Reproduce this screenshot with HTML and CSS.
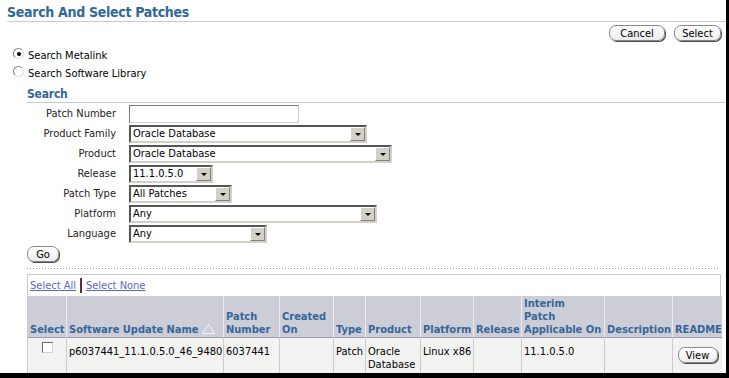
FILE: index.html
```html
<!DOCTYPE html>
<html lang="en">
<head>
  <meta charset="UTF-8">
  <title>Search And Select Patches</title>
  <link rel="stylesheet" href="styles.css">
</head>
<body>
  <div class="page">
    <h1 class="title">Search And Select Patches</h1>

    <div class="actions">
      <button class="btn cancel">Cancel</button>
      <button class="btn pick">Select</button>
    </div>

    <div class="choices">
      <div class="radio"><span class="dot on"></span>Search Metalink</div>
      <div class="radio"><span class="dot"></span>Search Software Library</div>
    </div>

    <div class="search">
      <h2 class="subtitle">Search</h2>

      <div class="form">
        <span class="lbl">Patch Number</span>
        <span class="field"><span class="input"></span></span>

        <span class="lbl">Product Family</span>
        <span class="field"><span class="select w238"><span class="val">Oracle Database</span><span class="arrow"></span></span></span>

        <span class="lbl">Product</span>
        <span class="field"><span class="select w263"><span class="val">Oracle Database</span><span class="arrow"></span></span></span>

        <span class="lbl">Release</span>
        <span class="field"><span class="select w84"><span class="val">11.1.0.5.0</span><span class="arrow"></span></span></span>

        <span class="lbl">Patch Type</span>
        <span class="field"><span class="select w103"><span class="val">All Patches</span><span class="arrow"></span></span></span>

        <span class="lbl">Platform</span>
        <span class="field"><span class="select w248"><span class="val">Any</span><span class="arrow"></span></span></span>

        <span class="lbl">Language</span>
        <span class="field"><span class="select w138"><span class="val">Any</span><span class="arrow"></span></span></span>
      </div>

      <button class="btn go">Go</button>

      <div class="dots"></div>

      <div class="results">
        <div class="bulk">
          <a href="#">Select All</a><span class="sep"></span><a href="#">Select None</a>
        </div>
        <table class="grid">
          <colgroup>
            <col style="width:38px">
            <col style="width:157px">
            <col style="width:56px">
            <col style="width:54px">
            <col style="width:32px">
            <col style="width:55px">
            <col style="width:53px">
            <col style="width:48px">
            <col style="width:83px">
            <col style="width:68px">
            <col style="width:50px">
          </colgroup>
          <thead>
            <tr>
              <th>Select</th>
              <th>Software Update Name <svg class="sort" width="13" height="10" viewBox="0 0 13 10"><polygon points="6.5,0.5 12.5,9.5 0.5,9.5" fill="none" stroke="#f4f4f8" stroke-width="1"/></svg></th>
              <th>Patch Number</th>
              <th>Created On</th>
              <th>Type</th>
              <th>Product</th>
              <th>Platform</th>
              <th>Release</th>
              <th>Interim<br>Patch<br>Applicable On</th>
              <th>Description</th>
              <th>README</th>
            </tr>
          </thead>
          <tbody>
            <tr>
              <td class="center"><span class="check"></span></td>
              <td class="nowrap">p6037441_11.1.0.5.0_46_9480</td>
              <td>6037441</td>
              <td></td>
              <td>Patch</td>
              <td>Oracle Database</td>
              <td class="nowrap">Linux x86</td>
              <td></td>
              <td>11.1.0.5.0</td>
              <td></td>
              <td class="center"><button class="btn view">View</button></td>
            </tr>
          </tbody>
        </table>
      </div>
    </div>
  </div>
</body>
</html>
```

FILE: styles.css
```css
html, body {
  margin: 0;
  padding: 0;
  background: #fff;
}
body {
  font-family: "DejaVu Sans Condensed", "DejaVu Sans", sans-serif;
  font-size: 11px;
  color: #000;
}
.page {
  width: 726px;
  height: 373px;
  border-right: 3px solid #000;
  border-bottom: 5px solid #000;
  overflow: hidden;
}
.title {
  margin: 0 0 0 7px;
  padding-top: 3px;
  height: 18px;
  line-height: 18px;
  font-size: 14px;
  letter-spacing: -0.3px;
  font-weight: bold;
  color: #336699;
  border-bottom: 1px solid #c9cbd3;
}
.actions {
  display: flex;
  justify-content: flex-end;
  gap: 9px;
  margin-top: 3px;
  padding-right: 5px;
}
.btn {
  height: 16px;
  padding: 0 6px;
  font-family: inherit;
  font-size: 11px;
  line-height: 13px;
  color: #000;
  background: linear-gradient(#ffffff, #ececec);
  border: 1px solid #8a8a8a;
  border-radius: 7px;
  box-shadow: 1px 1px 0 #4a4a4a;
  cursor: pointer;
}
.cancel {
  width: 56px;
}
.pick {
  width: 47px;
}
.choices {
  margin-top: 6px;
}
.radio {
  display: flex;
  align-items: flex-start;
  height: 18px;
  line-height: 18px;
  padding-left: 13px;
}
.dot {
  box-sizing: border-box;
  width: 11px;
  height: 11px;
  margin: 1px 4px 0 0;
  border-radius: 50%;
  border: 1px solid #808080;
  border-right-color: #e0e0e0;
  border-bottom-color: #e0e0e0;
  background: #fff;
  position: relative;
}
.dot.on::after {
  content: "";
  position: absolute;
  left: 2.5px;
  top: 2.5px;
  width: 4px;
  height: 4px;
  border-radius: 50%;
  background: #000;
}
.search {
  margin-left: 27px;
}
.subtitle {
  margin: 4px 0 0 0;
  height: 15px;
  line-height: 15px;
  font-size: 12px;
  letter-spacing: -0.2px;
  font-weight: bold;
  color: #336699;
  border-bottom: 1px solid #c9cbd3;
}
.form {
  display: grid;
  grid-template-columns: 89px auto;
  grid-auto-rows: 18px;
  column-gap: 13px;
  row-gap: 2px;
  margin-top: 2px;
}
.lbl {
  text-align: right;
  line-height: 18px;
  color: #222;
}
.field {
  display: flex;
}
.input {
  box-sizing: border-box;
  width: 170px;
  height: 18px;
  border: 1px solid #d4d0c8;
  border-top-color: #7a7a7a;
  border-left-color: #7a7a7a;
  background: #fff;
}
.select {
  box-sizing: border-box;
  display: flex;
  align-items: center;
  height: 18px;
  border: 2px solid #d4d0c8;
  border-top-color: #555;
  border-left-color: #555;
  background: #fff;
}
.select .val {
  flex: 1;
  padding-left: 2px;
  line-height: 14px;
  white-space: nowrap;
  overflow: hidden;
}
.select .arrow {
  box-sizing: border-box;
  width: 15px;
  height: 14px;
  background: #d4d0c8;
  border: 1px solid #808080;
  border-top-color: #fff;
  border-left-color: #fff;
  position: relative;
}
.select .arrow::after {
  content: "";
  position: absolute;
  left: 4px;
  top: 5px;
  border-left: 3px solid transparent;
  border-right: 3px solid transparent;
  border-top: 3px solid #000;
}
.w238 { width: 238px; }
.w263 { width: 263px; }
.w84 { width: 84px; }
.w103 { width: 103px; }
.w248 { width: 248px; }
.w138 { width: 138px; }
.go {
  display: block;
  margin-top: 3px;
  width: 32px;
  padding: 0;
}
.dots {
  margin-top: 6px;
  width: 693px;
  height: 1px;
  background: repeating-linear-gradient(to right, #999 0 1px, transparent 1px 3px);
}
.results {
  margin-top: 5px;
  width: 694px;
  box-sizing: border-box;
  border: 1px solid #c9cbd3;
  border-bottom: 0;
}
.bulk {
  display: flex;
  align-items: center;
  height: 21px;
  padding-left: 2px;
}
.bulk a {
  color: #5a68c4;
  text-decoration: underline;
}
.bulk .sep {
  width: 2px;
  height: 15px;
  margin: 0 4px;
  background: #5b2a55;
}
.grid {
  width: 693px;
  table-layout: fixed;
  border-collapse: separate;
  border-spacing: 0;
}
.grid th {
  height: 40px;
  padding: 0 2px 1px;
  vertical-align: bottom;
  text-align: left;
  line-height: 13px;
  font-size: 11px;
  font-weight: bold;
  color: #336699;
  background: #cdcdd8;
  border-left: 1px solid #ebebf0;
  border-bottom: 1px solid #9d9da8;
  overflow: hidden;
}
.grid th:first-child {
  border-left: 0;
}
.sort {
  vertical-align: -1px;
}
.grid td {
  height: 24px;
  padding: 7px 2px 2px;
  vertical-align: top;
  line-height: 13px;
  background: #f2f2f0;
  border-left: 1px solid #c9cbd3;
  border-bottom: 1px solid #c9cbd3;
  overflow: visible;
}
.grid td:first-child {
  border-left: 0;
}
.grid td.center {
  text-align: center;
}
.nowrap {
  white-space: nowrap;
}
.check {
  display: inline-block;
  box-sizing: border-box;
  width: 11px;
  height: 11px;
  margin-top: -3px;
  vertical-align: top;
  background: #fff;
  border: 1px solid #d4d0c8;
  border-top-color: #6a6a6a;
  border-left-color: #6a6a6a;
}
.view {
  margin-top: 2px;
  width: 40px;
  padding: 0;
}
```
